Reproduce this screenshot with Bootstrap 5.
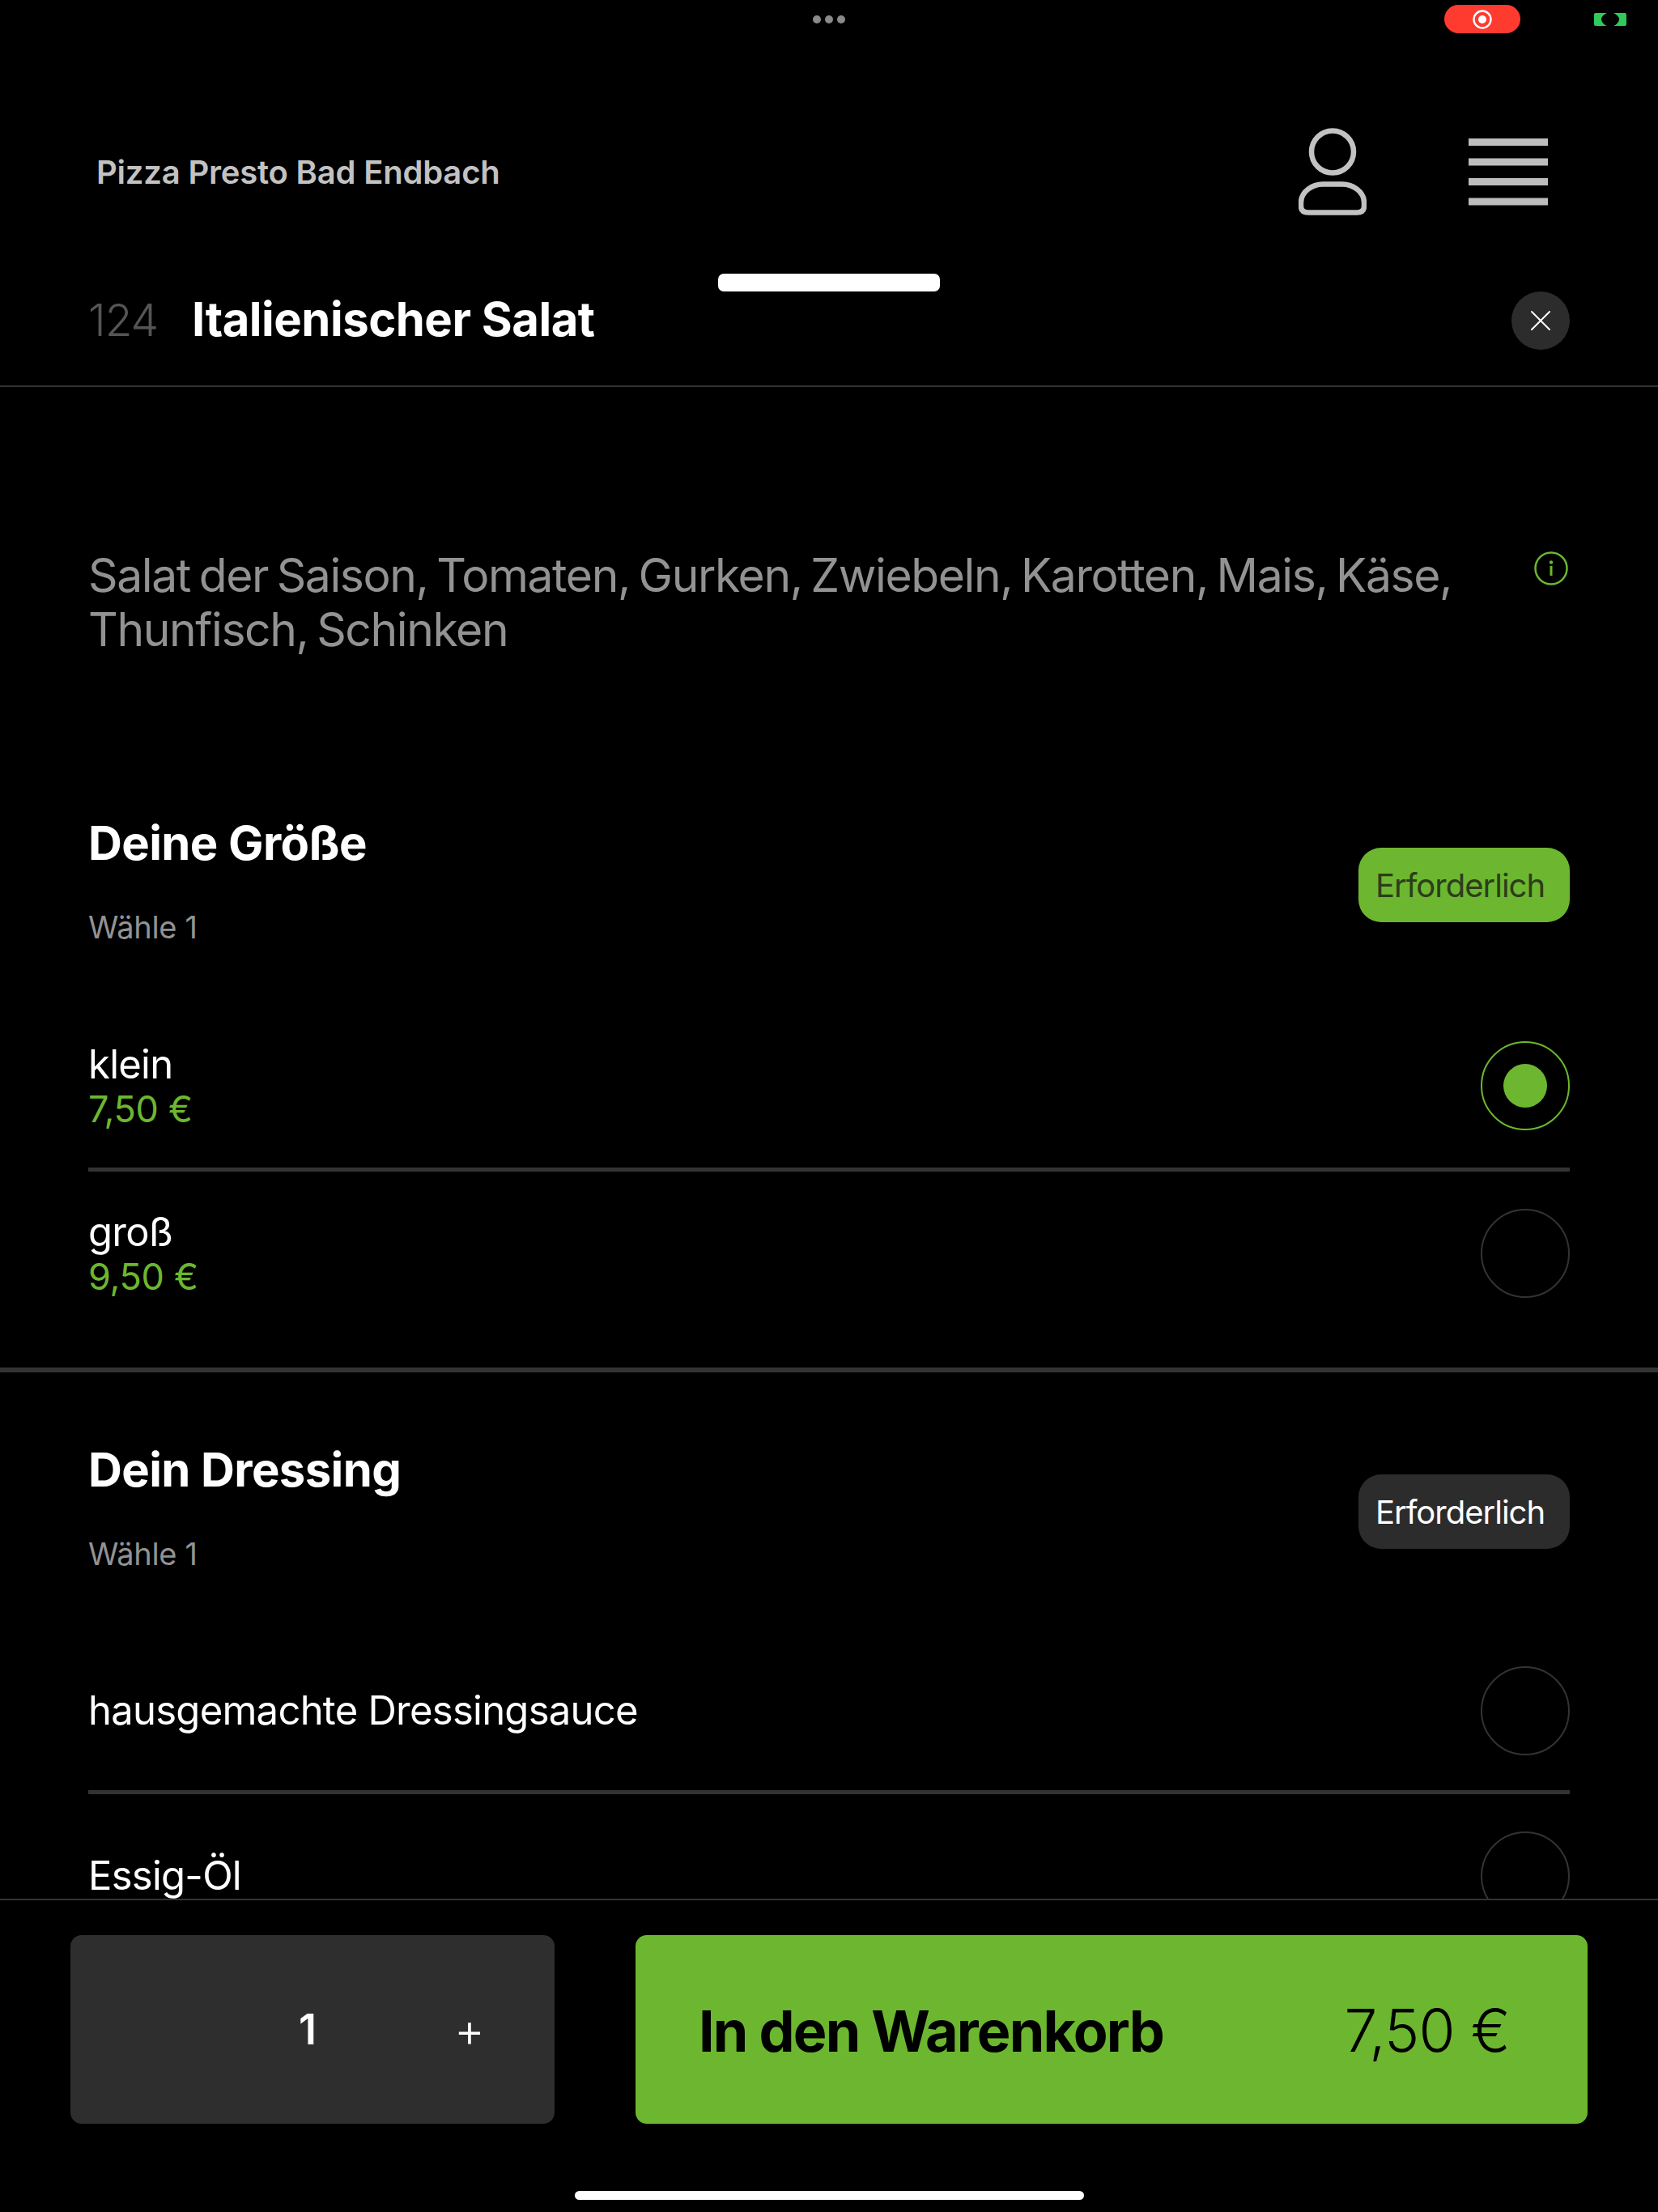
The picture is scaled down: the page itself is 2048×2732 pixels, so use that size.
<!doctype html>
<html lang="de">
<head>
<meta charset="utf-8">
<title>Italienischer Salat</title>
<link href="https://cdn.jsdelivr.net/npm/bootstrap@5.3.0/dist/css/bootstrap.min.css" rel="stylesheet">
<style>
body{background:#000;font-family:Inter,"Liberation Sans",sans-serif;color:#fff;margin:0}
.screen{width:2048px;height:2732px;overflow:hidden;background:#000}
.statusline{height:48px;display:grid;grid-template-columns:1fr auto 1fr;align-items:center;padding-top:0}
.dots{gap:5px;padding-bottom:1px}
.dots span{width:10px;height:10px;border-radius:50%;background:#8a8a8a}
.status-right{padding-right:39px;gap:91px;height:48px}
.rec{width:94px;height:35px;border-radius:18px;background:#ff3b30;margin-top:-1px}
.topbar{height:312px;padding:110px 136px 0 119px}
.topbar-row{height:108px}
.brand{font-size:40px;font-weight:600;color:#c2c2c2;letter-spacing:-.2px;padding-top:2px}
.top-icons{gap:126px}
.sheet-head{height:118px;padding:0 109px 46px;border-bottom:2px solid #333}
.handle{left:887px;top:-22px;width:274px;height:22px;background:#fff;border-radius:7px}
.item-no{font-size:55px;font-weight:300;color:#555;width:128px;letter-spacing:-1px}
.item-name{font-size:58px;font-weight:700;letter-spacing:-.5px;margin:0}
.closer{width:72px;height:72px;border-radius:50%;background:#2c2c2c;border:0;padding:0;margin-bottom:-2px}
.body-scroll{flex-basis:0;min-height:0;overflow:hidden}
.descr{padding:199px 109px 0;gap:40px}
.descr p{font-size:57px;line-height:67px;font-weight:400;color:#929292;margin:0;letter-spacing:-1.4px;word-spacing:-4px}
.info{flex:none;margin-top:4px;margin-right:2px}
.grp{padding:0 109px}
.grp-one{margin-top:195px;padding-bottom:41px}
.grp-two{margin-top:85px}
.grp-title{font-size:58px;line-height:70px;font-weight:700;margin:0;letter-spacing:-.6px}
.grp-sub{font-size:38px;line-height:50px;font-weight:400;color:#929292;margin-top:44px;letter-spacing:-.3px}
.req{height:92px;width:261px;border-radius:28px;font-size:40px;font-weight:400;background:#2c2c2c;color:#fff;letter-spacing:-1px;margin-top:10px;padding:2px 0 0 21px}
.req-on{background:#6cb72f;color:#2b3d1c}
.grp-list{margin-top:71px}
.grp-one .grp-list{margin-top:72px}
.opt{height:201px;border-bottom:5px solid #333}
.grp-one .opt{height:205px;padding-bottom:3px}
.opt-last,.grp-one .opt-last{border-bottom:0;height:201px;padding-bottom:0}
.opt-name{font-size:49px;line-height:58px;font-weight:400;letter-spacing:-.75px}
.opt-price{font-size:45px;line-height:52px;font-weight:400;color:#6cb72f;letter-spacing:-.3px}
.tick{width:110px;height:110px;border-radius:50%;border:2px solid #333;flex:none}
.tick-on{border-color:#6cb72f}
.tick-on span{width:54px;height:54px;border-radius:50%;background:#6cb72f}
.rule-wide{height:6px;background:#333}
.foot{border-top:2px solid #333;height:387px;padding:43px 87px 0}
.foot-row{gap:100px;height:233px}
.qty{width:598px;border-radius:14px;background:#2e2e2e;display:grid;grid-template-columns:193px 200px 200px;align-items:center;text-align:center}
.qty-num{font-size:52px;font-weight:600}
.qty-plus{font-size:58px;font-weight:300;line-height:1}
.addcart{border-radius:14px;background:#6cb72f;padding:3px 96px 0 78px;color:#000}
.addcart b{font-size:70px;font-weight:700;letter-spacing:-1.8px}
.addcart span{font-size:73px;font-weight:300;letter-spacing:-.8px}
.homebar{width:629px;height:11px;background:#fff;border-radius:6px;margin:83px auto 0 623px}
</style>
</head>
<body>
<div class="screen d-flex flex-column">
  <div class="statusline flex-shrink-0">
    <div></div>
    <div class="dots d-flex"><span></span><span></span><span></span></div>
    <div class="status-right d-flex justify-content-end align-items-center">
      <div class="rec d-flex align-items-center justify-content-center">
        <svg width="26" height="26" viewBox="0 0 26 26"><circle cx="13" cy="13" r="10.500" fill="none" stroke="#fff" stroke-width="2.400"/><circle cx="13" cy="13" r="5" fill="#fff"/></svg>
      </div>
      <svg width="40" height="16" viewBox="0 0 40 16"><path fill="#30c95a" d="M2 0h14q-3 1-5 3.500-2 2-2 4.500t2 4.500q2 2.500 5 3.500H2q-2 0-2-2V2q0-2 2-2zM38 0H24q3 1 5 3.500 2 2 2 4.500t-2 4.500q-2 2.500-5 3.500h14q2 0 2-2V2q0-2-2-2z"/></svg>
    </div>
  </div>

  <div class="topbar flex-shrink-0">
    <div class="topbar-row d-flex align-items-center justify-content-between">
      <div class="brand">Pizza Presto Bad Endbach</div>
      <div class="top-icons d-flex align-items-center">
        <svg width="84" height="108" viewBox="0 0 84 108" fill="none" stroke="#c2c2c2" stroke-width="6.500"><circle cx="42" cy="29.500" r="26"/><path d="M12 104.500h60q9 0 9-8v-4c0-14-14-23-27-23H30C17 69.500 3 78.500 3 92.500v4q0 8 9 8z"/></svg>
        <svg width="98" height="83" viewBox="0 0 98 83" fill="#bdbdbd"><rect width="98" height="9"/><rect y="24.500" width="98" height="9"/><rect y="49" width="98" height="9"/><rect y="73.500" width="98" height="9"/></svg>
      </div>
    </div>
  </div>

  <div class="sheet-head flex-shrink-0 position-relative d-flex align-items-center">
    <div class="handle position-absolute"></div>
    <div class="item-no">124</div>
    <h1 class="item-name flex-grow-1">Italienischer Salat</h1>
    <button class="closer d-flex align-items-center justify-content-center" aria-label="Schließen">
      <svg width="26" height="26" viewBox="0 0 26 26" stroke="#fff" stroke-width="2" stroke-linecap="round"><path d="M2 2l22 22M24 2L2 24"/></svg>
    </button>
  </div>

  <div class="body-scroll flex-grow-1">
    <div class="descr d-flex justify-content-between align-items-start">
      <p>Salat der Saison, Tomaten, Gurken, Zwiebeln, Karotten, Mais, Käse, Thunfisch, Schinken</p>
      <svg class="info" width="42" height="42" viewBox="0 0 42 42"><circle cx="21" cy="21" r="19.500" fill="none" stroke="#6cb72f" stroke-width="2.500"/><circle cx="21" cy="13.500" r="2.200" fill="#6cb72f"/><rect x="19.500" y="18" width="3" height="12" fill="#6cb72f"/></svg>
    </div>

    <section class="grp grp-one">
      <div class="d-flex justify-content-between align-items-center">
        <div>
          <h2 class="grp-title">Deine Größe</h2>
          <div class="grp-sub">Wähle 1</div>
        </div>
        <div class="req req-on d-flex align-items-center">Erforderlich</div>
      </div>
      <div class="grp-list">
        <div class="opt d-flex align-items-center justify-content-between">
          <div><div class="opt-name">klein</div><div class="opt-price">7,50 €</div></div>
          <div class="tick tick-on d-flex align-items-center justify-content-center"><span></span></div>
        </div>
        <div class="opt opt-last d-flex align-items-center justify-content-between">
          <div><div class="opt-name">groß</div><div class="opt-price">9,50 €</div></div>
          <div class="tick"></div>
        </div>
      </div>
    </section>
    <div class="rule-wide"></div>
    <section class="grp grp-two">
      <div class="d-flex justify-content-between align-items-center">
        <div>
          <h2 class="grp-title">Dein Dressing</h2>
          <div class="grp-sub">Wähle 1</div>
        </div>
        <div class="req d-flex align-items-center">Erforderlich</div>
      </div>
      <div class="grp-list">
        <div class="opt d-flex align-items-center justify-content-between">
          <div class="opt-name">hausgemachte Dressingsauce</div>
          <div class="tick"></div>
        </div>
        <div class="opt opt-last d-flex align-items-center justify-content-between">
          <div class="opt-name">Essig-Öl</div>
          <div class="tick"></div>
        </div>
      </div>
    </section>
  </div>

  <div class="foot flex-shrink-0">
    <div class="foot-row d-flex">
      <div class="qty">
        <div></div>
        <div class="qty-num">1</div>
        <div class="qty-plus">+</div>
      </div>
      <div class="addcart flex-grow-1 d-flex align-items-center justify-content-between">
        <b>In den Warenkorb</b>
        <span>7,50 €</span>
      </div>
    </div>
    <div class="homebar"></div>
  </div>
</div>
<script src="https://cdn.jsdelivr.net/npm/bootstrap@5.3.0/dist/js/bootstrap.bundle.min.js"></script>
</body>
</html>
